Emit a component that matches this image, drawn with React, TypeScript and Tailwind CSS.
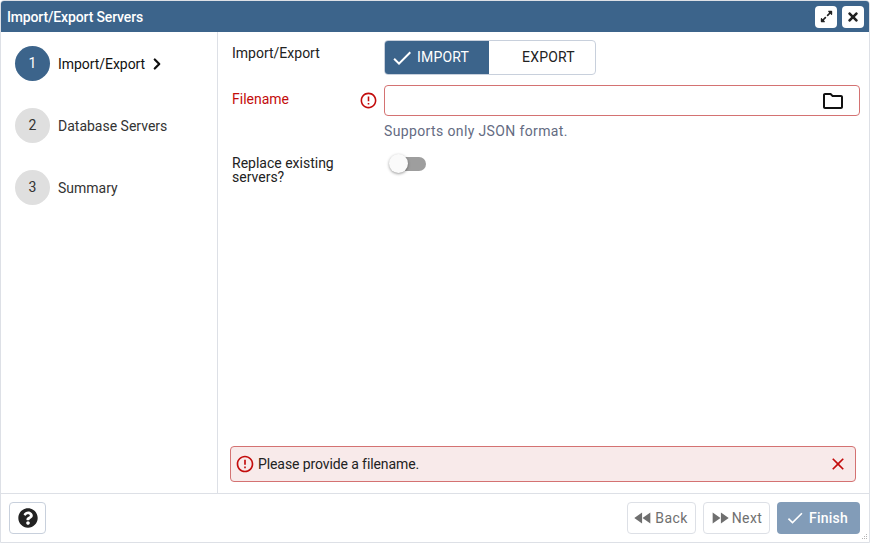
import { FaExpandAlt, FaTimes, FaQuestionCircle } from "react-icons/fa";
import { MdOutlineFolder, MdErrorOutline, MdClose, MdCheck, MdFastRewind, MdFastForward } from "react-icons/md";
import { ChevronRight } from "lucide-react";

const steps = [
  { n: 1, label: "Import/Export", active: true },
  { n: 2, label: "Database Servers", active: false },
  { n: 3, label: "Summary", active: false },
];

export default function App() {
  return (
    <div className="w-[870px] h-[543px] flex flex-col bg-white border border-[#dde0e6] rounded-t-[4px] overflow-hidden font-['Roboto',sans-serif] text-[14px] text-[#222222]">
      {/* Title bar */}
      <div className="h-[31px] shrink-0 bg-[#3c648b] flex items-center justify-between pl-[6px] pr-[5px]">
        <span className="text-white text-[14px] font-medium tracking-[-0.15px] pt-[1px]">Import/Export Servers</span>
        <div className="flex gap-[5px]">
          <button className="w-[22px] h-[22px] bg-white rounded-[4px] flex items-center justify-center text-[#222222]">
            <FaExpandAlt size={13} />
          </button>
          <button className="w-[22px] h-[22px] bg-white rounded-[4px] flex items-center justify-center text-[#222222]">
            <FaTimes size={14} />
          </button>
        </div>
      </div>

      <div className="flex-1 flex min-h-0">
        {/* Steps */}
        <div className="w-[217px] shrink-0 border-r border-[#dde0e6] pl-[14px] pt-[14px] flex flex-col gap-[27px]">
          {steps.map((s) => (
            <div key={s.n} className="flex items-center h-[35px]">
              <div className={s.active
                ? "w-[35px] h-[35px] rounded-full bg-[#3c648b] text-white flex items-center justify-center"
                : "w-[35px] h-[35px] rounded-full bg-[#dfdfdf] text-[#333333] flex items-center justify-center"}>
                {s.n}
              </div>
              <span className={s.active ? "ml-[8px] pt-[1px] text-[#111111] tracking-[-0.05px]" : "ml-[8px] pt-[1px] text-[#333333]"}>{s.label}</span>
              {s.active && <ChevronRight size={18} strokeWidth={3} className="ml-[3px] text-[#111111]" />}
            </div>
          ))}
        </div>

        {/* Form */}
        <div className="flex-1 min-w-0 flex flex-col pl-[14px] pr-[9px] pt-[8px] pb-[11px]">
          <div className="flex">
            <label className="w-[152px] pt-[5px] leading-[16px]">Import/Export</label>
            <div className="flex h-[35px] w-[212px] rounded-[4px] border border-[#c8d0dc] overflow-hidden">
              <div className="w-[105px] -ml-px -mt-px h-[35px] bg-[#3c648b] text-white flex items-center pl-[6px] gap-[3px] rounded-l-[4px] border-r border-[#3c648b]">
                <MdCheck size={24} />
                <span className="tracking-[0.2px]">IMPORT</span>
              </div>
              <div className="flex-1 flex items-center justify-center pl-[13px] tracking-[0.2px] text-[#222222]">EXPORT</div>
            </div>
          </div>

          <div className="flex mt-[10px]">
            <label className="w-[128px] pt-[6px] text-[#c30c0c] leading-[16px]">Filename</label>
            <div className="w-[24px] pt-[6px]">
              <MdErrorOutline size={19} className="text-[#c30c0c] -ml-[1px]" />
            </div>
            <div className="flex-1">
              <div className="h-[31px] rounded-[4px] border border-[#d47272] flex items-center justify-end pr-[14px]">
                <MdOutlineFolder size={24} className="text-[#111111]" />
              </div>
              <div className="mt-[6px] text-[#646b82] tracking-[0.37px] leading-[18px]">Supports only JSON format.</div>
            </div>
          </div>

          <div className="flex mt-[15px]">
            <label className="w-[152px] pt-[1px] leading-[14px]">Replace existing<br />servers?</label>
            <div className="relative w-[42px] h-[22px] ml-[3px]">
              <div className="absolute left-[6px] top-[2px] w-[33px] h-[14px] rounded-full bg-[#9e9e9e]" />
              <div className="absolute left-[2px] -top-px w-[19px] h-[19px] rounded-full bg-[#fafafa] shadow-[0_1px_3px_rgba(0,0,0,0.4)]" />
            </div>
          </div>

          {/* Error banner */}
          <div className="mt-auto h-[36px] mr-[4px] -ml-[2px] rounded-[4px] border border-[#d47272] bg-[#f8eaea] flex items-center pl-[4px] pr-[7px]">
            <MdErrorOutline size={20} className="text-[#c30c0c]" />
            <span className="ml-[3px] flex-1 tracking-[-0.1px]">Please provide a filename.</span>
            <MdClose size={20} className="text-[#c30c0c]" />
          </div>
        </div>
      </div>

      {/* Footer */}
      <div className="h-[49px] shrink-0 border-t border-[#dde0e6] relative flex items-center justify-between pl-[8px] pr-[9px]">
        <button className="w-[37px] h-[32px] rounded-[4px] border border-[#c8d0dc] flex items-center justify-center text-[#222222]">
          <FaQuestionCircle size={20} />
        </button>
        <div className="flex gap-[7px]">
          <button className="w-[69px] h-[32px] rounded-[4px] border border-[#dde0e6] flex items-center justify-center gap-[1px] pr-[3px] text-[#6f6f6f] tracking-[0.4px]">
            <MdFastRewind size={22} />Back
          </button>
          <button className="w-[67px] h-[32px] rounded-[4px] border border-[#dde0e6] flex items-center justify-center gap-[1px] pr-[2px] text-[#6f6f6f] tracking-[0.4px]">
            <MdFastForward size={22} />Next
          </button>
          <button className="w-[83px] h-[32px] rounded-[4px] bg-[#829cb8] flex items-center justify-center gap-[4px] pr-[4px] text-white font-medium tracking-[0.2px]">
            <MdCheck size={20} />Finish
          </button>
        </div>
        <svg className="absolute right-0 bottom-0" width="9" height="9" viewBox="0 0 9 9" fill="#b5b5b5">
          <rect x="6" y="1" width="1" height="1" />
          <rect x="4" y="3" width="1" height="1" />
          <rect x="6" y="3" width="1" height="1" />
          <rect x="2" y="5" width="1" height="1" />
          <rect x="4" y="5" width="1" height="1" />
          <rect x="6" y="5" width="1" height="1" />
        </svg>
      </div>
    </div>
  );
}
